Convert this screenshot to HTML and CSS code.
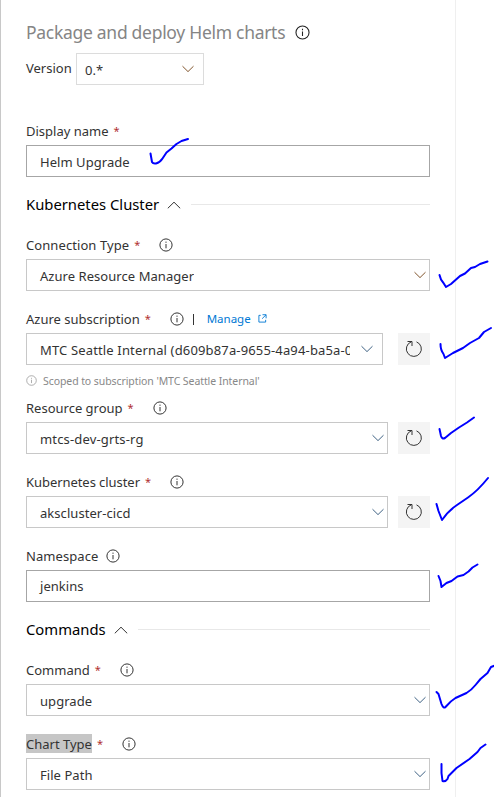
FILE: index.html
```html
<!DOCTYPE html>
<html lang="en">
<head>
<meta charset="utf-8">
<title>Package and deploy Helm charts</title>
<link rel="stylesheet" href="styles.css">
</head>
<body>
<svg class="defs" aria-hidden="true">
  <symbol id="info" viewBox="0 0 14 14"><circle cx="7" cy="7" r="6.1"/><path d="M7 6v4.3M7 3.6v1.2"/></symbol>
  <symbol id="down" viewBox="0 0 12 8"><path d="M.5 1.2 6 6.6l5.500-5.400"/></symbol>
  <symbol id="up" viewBox="0 0 14 8"><path d="M.8 7.300 7 1.200l6.200 6.100"/></symbol>
  <symbol id="refresh" viewBox="0 0 18 18"><path d="M11.500 1.900A7.500 7.500 0 1 1 6.200 1.900M2.500 1.500h4.500v4.500"/></symbol>
  <symbol id="external" viewBox="0 0 10 10"><path d="M3 1.500H1v7.500h7.500V6.500M5 .8h4v4M9 .8 4.600 5.200"/></symbol>
</svg>
<main class="panel">
  <header class="title"><h1>Package and deploy Helm charts</h1><svg class="info large"><use href="#info"/></svg></header>
  <div class="version"><span class="version-label">Version</span><div class="control select"><span>0.*</span><svg class="chevron warm"><use href="#down"/></svg></div></div>

  <section class="field">
    <div class="label"><span class="name">Display name</span><i>*</i></div>
    <div class="control input"><span>Helm Upgrade</span></div>
  </section>

  <div class="group"><h2>Kubernetes Cluster</h2><svg class="caret"><use href="#up"/></svg><hr></div>

  <section class="field">
    <div class="label"><span class="name roomy">Connection Type</span><i>*</i><svg class="info"><use href="#info"/></svg></div>
    <div class="control select"><span>Azure Resource Manager</span><svg class="chevron warm"><use href="#down"/></svg></div>
  </section>

  <section class="field">
    <div class="label"><span class="name">Azure subscription</span><i>*</i><svg class="info"><use href="#info"/></svg><b class="bar"></b><a>Manage</a><svg class="external"><use href="#external"/></svg></div>
    <div class="row wide-gap"><div class="control select"><span class="long-value">MTC Seattle Internal (d609b87a-9655-4a94-ba5a-0</span><svg class="chevron"><use href="#down"/></svg></div><button><svg><use href="#refresh"/></svg></button></div>
    <div class="hint"><svg class="info"><use href="#info"/></svg><span>Scoped to subscription 'MTC Seattle Internal'</span></div>
  </section>

  <section class="field">
    <div class="label"><span class="name">Resource group</span><i>*</i><svg class="info"><use href="#info"/></svg></div>
    <div class="row"><div class="control select"><span class="roomy">mtcs-dev-grts-rg</span><svg class="chevron"><use href="#down"/></svg></div><button><svg><use href="#refresh"/></svg></button></div>
  </section>

  <section class="field">
    <div class="label"><span class="name tight">Kubernetes cluster</span><i>*</i><svg class="info"><use href="#info"/></svg></div>
    <div class="row"><div class="control select"><span>akscluster-cicd</span><svg class="chevron"><use href="#down"/></svg></div><button><svg><use href="#refresh"/></svg></button></div>
  </section>

  <section class="field">
    <div class="label"><span class="name roomy">Namespace</span><svg class="info near"><use href="#info"/></svg></div>
    <div class="control input"><span class="raised">jenkins</span></div>
  </section>

  <div class="group"><h2>Commands</h2><svg class="caret"><use href="#up"/></svg><hr></div>

  <section class="field">
    <div class="label"><span class="name">Command</span><i>*</i><svg class="info"><use href="#info"/></svg></div>
    <div class="control select"><span>upgrade</span><svg class="chevron"><use href="#down"/></svg></div>
  </section>

  <section class="field">
    <div class="label"><span class="name"><mark>Chart Type</mark></span><i>*</i><svg class="info"><use href="#info"/></svg></div>
    <div class="control select"><span>File Path</span><svg class="chevron"><use href="#down"/></svg></div>
  </section>
</main>
<!-- Freehand ink annotations over the form -->
<svg class="ink" viewBox="0 0 494 797" aria-hidden="true">
  <path d="M150.500 153.500 152 162q1 2 4 1.500 4-1 6.500-5l4-6 5-4 5-4.500 5-3 6.500-2"/>
  <path d="M439.500 275q1 5 4 8l2.500 4 5-3 9-8 5-2.500 6-5.500 4-1 5-3 7.500-2.500"/>
  <path d="M440.500 344q0 6 3 10l1.500 4 8-5 10-5 7-5 9-5 5-6 7-4"/>
  <path d="M439.500 429 441 436q1 3.500 4 2l6-5 8-5.500 8-5 7-5"/>
  <path d="M436.500 504l2 7 3.500 9q6-9 15-15l11-7.500q10-7 20-19.500"/>
  <path d="M438.500 576l2 5 1 6 5-4 5-2 6-4.500 6-1.500 5-3.500 4-4 5-3"/>
  <path d="M436.500 692l2 2 3 10q2 5 4 3 5-6 10-9l11-5q5-3 9-8l5-6 7-6 3.500-6 4-1.500"/>
  <path d="M441.500 764v9l1 8q3 1 5-2l1-3 8-8 13-9 8-7 3-4 5-3.500"/>
</svg>
</body>
</html>
```
FILE: styles.css
```css
* { box-sizing: border-box; }
body { margin: 0; background: #fff; color: #333; font: 13px/20px "Noto Sans", "Open Sans", sans-serif; }
svg { display: block; flex: none; fill: none; stroke: #333; stroke-width: 1; overflow: visible; }
.defs { position: absolute; width: 0; height: 0; }
.panel { width: 456px; height: 797px; padding: 20px 25px 0; border-left: 1px solid #c8c8c8; border-right: 1px solid #efefef; overflow: hidden; }
.title { display: flex; align-items: center; height: 24px; }
h1 { width: 269px; margin: 0; font-size: 17.500px; font-weight: 400; letter-spacing: -.29px; color: #858585; white-space: nowrap; }
.version { display: flex; height: 32px; margin: 9px 0 36px; }
.version-label { width: 50px; line-height: 31px; }
.version .control { flex: none; width: 128px; border-color: #dcdcdc; }
.version .chevron { margin-right: 6px; }
.field { margin-bottom: 18px; }
.label { display: flex; align-items: center; height: 20px; margin-bottom: 4px; white-space: nowrap; }
.label i { width: 6px; margin-left: 5px; font-size: 11px; font-style: normal; color: #b03030; }
.info { width: 14px; height: 14px; }
.label .info { margin-left: 19px; }
.label .near { margin-left: 8px; }
.info.large { width: 15px; height: 15px; stroke: #222; }
.control { display: flex; align-items: center; justify-content: space-between; flex: 1; height: 32px; padding: 0 3px 0 0; border: 1px solid #c8c8c8; background: #fff; white-space: nowrap; }
.control > span { padding: 1px 0 0 13px; overflow: hidden; letter-spacing: .05px; }
.control > .raised { padding-top: 0; padding-bottom: 1px; }
.version .control > span { padding-left: 8px; }
.chevron { width: 12px; height: 8px; margin-bottom: 1px; stroke: #3f6284; }
.input { border-color: #a6a6a6; }
.warm { stroke: #80542c; }
.row { display: flex; gap: 10px; }
.wide-gap { gap: 15px; }
.wide-gap .chevron { margin-right: 6px; }
.control > .long-value { width: 323px; letter-spacing: .15px; }
.control > .roomy { letter-spacing: .16px; }
.name.roomy { letter-spacing: .08px; }
.tight { letter-spacing: -.06px; }
button { display: grid; place-items: center; width: 32px; height: 32px; padding: 0; border: 0; background: #f4f4f4; }
button svg { width: 18px; height: 18px; }
.bar { width: 1px; height: 11px; margin: 0 13px 0 9px; background: #333; }
a { color: #0078d4; font-size: 11.500px; }
.external { width: 9px; height: 9px; margin: -2px 0 0 7px; stroke: #0078d4; }
.hint { display: flex; align-items: center; height: 33px; color: #888; font-size: 10.500px; letter-spacing: -.08px; white-space: nowrap; }
.hint .info { width: 11px; height: 11px; margin: -3px 6px 0 0; stroke: #999; }
.hint span { margin-top: -1px; }
.field:has(.hint) { margin-bottom: 0; }
.group { display: flex; align-items: center; height: 58px; margin-top: -18px; padding-bottom: 3px; color: #000; }
h2 { margin: -1px 8px 0 0; font-size: 14.800px; font-weight: 400; white-space: nowrap; }
.caret { width: 14px; height: 8px; }
hr { flex: 1; height: 1px; margin: 0 0 0 10px; border: 0; background: #e8e8e8; }
mark { display: block; height: 19px; line-height: 20px; margin-top: -1px; background: #c6c6c6; color: #333; }
.ink { position: absolute; inset: 0; width: 494px; height: 797px; stroke: #00f; stroke-width: 2; stroke-linecap: round; stroke-linejoin: round; pointer-events: none; }
```
